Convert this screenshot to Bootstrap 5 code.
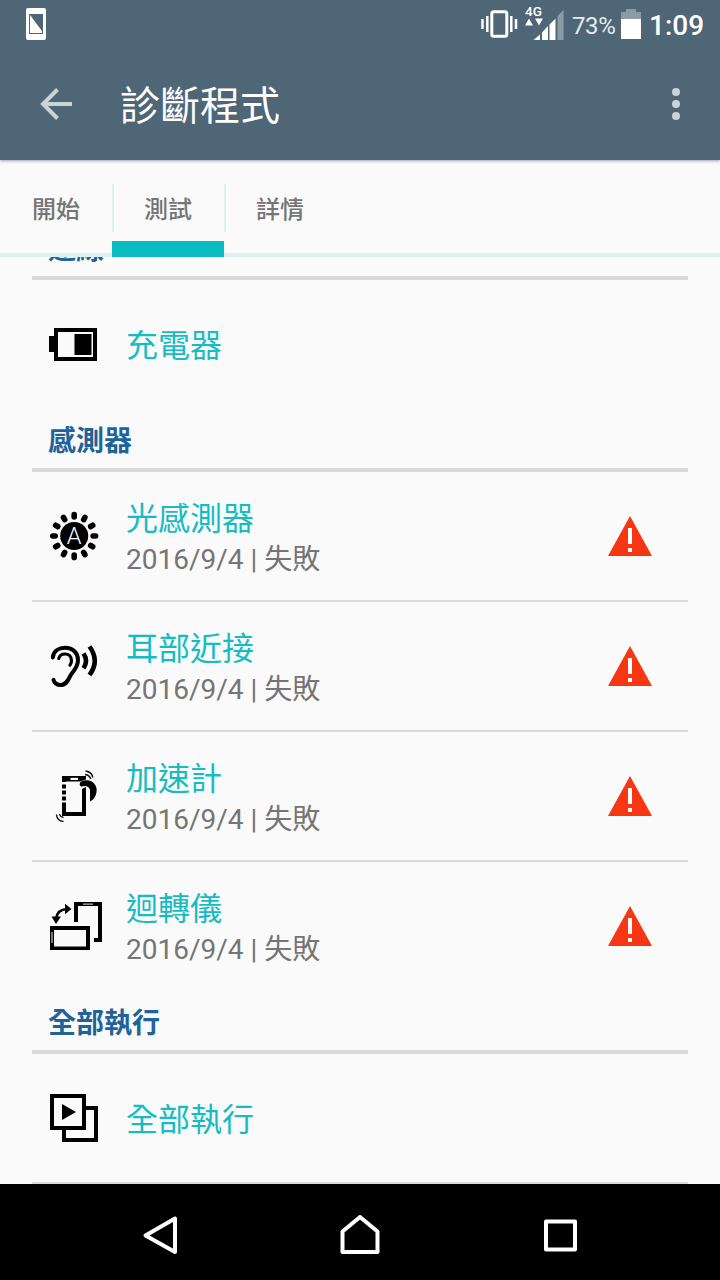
<!DOCTYPE html>
<html lang="zh-Hant">
<head>
<meta charset="utf-8">
<meta name="viewport" content="width=device-width, initial-scale=1">
<title>診斷程式</title>
<link href="https://cdn.jsdelivr.net/npm/bootstrap@5.3.0/dist/css/bootstrap.min.css" rel="stylesheet">
<style>
  body { height: 1280px; background: #fafafa; font-family: Roboto, "Noto Sans CJK TC", sans-serif; line-height: 1; }
  svg { display: block; flex: none; }
  .top-area { background: #4e6675; color: #fff; box-shadow: 0 1px 3px rgba(50,60,90,.45); z-index: 3; }
  .status-bar { height: 48px; padding-left: 26px; padding-right: 16px; }
  .status-pct { font-size: 24px; color: #e6ebee; margin-left: 8px; width: 45px; letter-spacing: -.4px; padding-top: 3px; }
  .status-batt { margin-left: 4px; }
  .status-time { font-size: 28px; font-weight: 500; margin-left: 8px; width: 55px; white-space: nowrap; padding-top: 3px; }
  .app-bar { height: 112px; padding-left: 40px; padding-right: 40px; }
  .app-title { font-size: 40px; font-weight: 400; margin-left: 48px; padding-top: 5px; }
  .tab-strip { height: 97px; z-index: 2; background: #fafafa; border-bottom: 4px solid #daf1f0; }
  .tab-item { width: 112px; height: 97px; color: #757575; font-size: 24px; font-weight: 500; border-bottom: 16px solid transparent; padding-top: 19px; }
  .tab-item.active { border-bottom-color: #0bbdc2; }
  .tab-gap { width: 2px; height: 48px; margin: 24px -2px 0 0; background: #daf1f0; z-index: 1; }
  .scroller { min-height: 0; padding: 0 32px; }
  .section-head { height: 64px; flex: none; border-bottom: 4px solid #dadada; padding: 7px 16px 0; color: #1f6399; font-size: 28px; font-weight: 700; }
  .entry { height: 128px; flex: none; padding-left: 12px; padding-right: 36px; }
  .entry.ruled { height: 130px; border-bottom: 2px solid #dadada; }
  .entry-text { margin-left: 18px; padding-top: 8px; }
  .entry-name { font-size: 32px; color: #16bcc2; line-height: 40px; }
  .entry-text.entry-name { padding-top: 3px; }
  .entry-note { font-size: 28px; color: #757575; line-height: 42px; white-space: nowrap; }
  .nav-keys { height: 96px; background: #000; padding-top: 6px; }
</style>
</head>
<body class="d-flex flex-column overflow-hidden">
<svg width="0" height="0" class="position-absolute" aria-hidden="true">
  <symbol id="warn" viewBox="0 0 44 40"><path d="M22 0 44 40H0Z" fill="#f73614"/><path d="M20 12h4v16h-4zM20 32h4v4h-4z" fill="#fff"/></symbol>
</svg>

<header class="top-area position-relative flex-shrink-0">
  <div class="status-bar d-flex align-items-center">
    <svg width="20" height="32"><path fill="#fff" fill-rule="evenodd" d="M2 0H18Q20 0 20 2V30Q20 32 18 32H2Q0 32 0 30V2Q0 0 2 0ZM3 6V26H17V6Z"/><path fill="#fff" d="M4 7 16 23V25H4Z"/></svg>
    <svg class="ms-auto" width="84" height="40" viewBox="480 4 84 40">
      <rect x="491.800" y="11.800" width="15" height="24.500" rx="2" fill="none" stroke="#fff" stroke-width="3"/>
      <path d="M482.500 19v10M487.300 16v16M511.300 16v16M516 19v10" stroke="#fff" stroke-width="2.500"/>
      <text x="525" y="16" font-size="13.500" font-weight="500" fill="#fff">4G</text>
      <path d="M525 25.500 529 18.500 533 25.500ZM535 18.500H543L539 25.500Z" fill="#fff"/>
      <path d="M533.500 40 540 34.500V40ZM542 32.500 548 26V40H542ZM549.500 24.500 555.500 18.500V40H549.500Z" fill="#fff"/>
      <path d="M557.500 16 563.500 10V40H557.500Z" fill="#8b9ba6"/>
    </svg>
    <span class="status-pct">73%</span>
    <svg class="status-batt" width="20" height="30" viewBox="0 0 20 30"><path fill="#8b9ba6" d="M5 0h10v3h5v7H0V3h5z"/><path fill="#fff" d="M0 10h20v20H0z"/></svg>
    <span class="status-time">1:09</span>
  </div>
  <div class="app-bar d-flex align-items-center">
    <svg width="32" height="32" viewBox="0 0 32 32" fill="none" stroke="#c9d3d8" stroke-width="4"><path d="M32 16H3M17.500 1.500 3 16 17.500 30.500"/></svg>
    <h1 class="app-title mb-0">診斷程式</h1>
    <svg class="ms-auto" width="8" height="32" viewBox="0 0 8 32" fill="#c9d3d8"><circle cx="4" cy="4" r="4"/><circle cx="4" cy="16" r="4"/><circle cx="4" cy="28" r="4"/></svg>
  </div>
</header>

<nav class="tab-strip position-relative d-flex flex-shrink-0">
  <div class="tab-item d-flex align-items-center justify-content-center">開始</div>
  <div class="tab-gap"></div>
  <div class="tab-item active d-flex align-items-center justify-content-center">測試</div>
  <div class="tab-gap"></div>
  <div class="tab-item d-flex align-items-center justify-content-center">詳情</div>
</nav>

<main class="scroller flex-grow-1 d-flex flex-column justify-content-end overflow-hidden">
  <div class="section-head d-flex align-items-center">連線</div>
  <div class="entry d-flex align-items-center">
    <svg width="64" height="56"><path d="M5 20h5v16H5z"/><path fill-rule="evenodd" d="M10 12h43v33H10zM14 16v25h35V16z"/><path d="M30.500 18h17v21h-17z"/></svg>
    <div class="entry-text entry-name">充電器</div>
  </div>

  <div class="section-head d-flex align-items-center">感測器</div>
  <div class="entry ruled d-flex align-items-center">
    <svg width="64" height="56" viewBox="0 0 64 56">
      <circle cx="30.200" cy="28" r="14"/>
      <g stroke="#000" stroke-width="5.600" stroke-linecap="round">
        <path d="M30.200 6.600v2.400M30.200 47v2.400M8.800 28h2.400M49.200 28h2.400"/>
        <path d="M30.200 6.600v2.400M30.200 47v2.400M8.800 28h2.400M49.200 28h2.400" transform="rotate(30 30.200 28)"/>
        <path d="M30.200 6.600v2.400M30.200 47v2.400M8.800 28h2.400M49.200 28h2.400" transform="rotate(60 30.200 28)"/>
      </g>
      <text x="30.200" y="36" font-size="23.500" font-weight="300" text-anchor="middle" fill="#fff">A</text>
    </svg>
    <div class="entry-text"><div class="entry-name">光感測器</div><div class="entry-note">2016/9/4 | 失敗</div></div>
    <svg class="ms-auto" width="44" height="40"><use href="#warn"/></svg>
  </div>
  <div class="entry ruled d-flex align-items-center">
    <svg width="64" height="56" viewBox="0 0 64 56" fill="none" stroke="#000" stroke-width="4">
      <path stroke-linecap="round" d="M8.800 19.500C9.500 13 15 9.800 21 9.800C29 9.800 34 15 34 22C34 30 29 32.500 26.500 37.500C24.500 41.500 22.500 47 16.500 47C12.500 47 10.500 45 9.500 41.800"/>
      <path stroke-width="3.200" stroke-linecap="round" d="M14.800 20.500C15.500 17.500 18 16 21 16C25 16 27.500 19 27.500 22.500Q27.500 25 26 27.200"/>
      <path stroke-width="4.600" d="M39.500 15.500Q44.500 22.800 39.500 30.200M45.500 8.500Q56 22.800 45.500 37"/>
    </svg>
    <div class="entry-text"><div class="entry-name">耳部近接</div><div class="entry-note">2016/9/4 | 失敗</div></div>
    <svg class="ms-auto" width="44" height="40"><use href="#warn"/></svg>
  </div>
  <div class="entry ruled d-flex align-items-center">
    <svg width="64" height="56" viewBox="0 0 64 56">
      <path d="M18 8h24v3.500l-6 2H22v.500h-4zM18 16.500h4v4h-4zM18 22.500h4v4h-4zM18 28.500h4v4h-4zM18 34.500h4v9.500h16V21l4-2v29H18z"/>
      <path d="M26.500 9.800h7.500v2.200h-7.500z" fill="#fafafa"/>
      <path d="M36 14.500Q38 12.300 42 12.200Q48 12 50.500 16Q53.200 19 52.500 24Q51.500 31 46 33.500V21.500Q45 18.500 42 18L37 18.500Q35 16.500 36 14.500Z"/>
      <g fill="none" stroke="#111" stroke-width="1.400"><path d="M41 6.500Q45.500 7 46.800 11M41.500 3Q48 4 48.800 9.500M19.500 49.500Q16 49 15.500 46M19.500 53.500Q13 53 12.500 46.500"/></g>
    </svg>
    <div class="entry-text"><div class="entry-name">加速計</div><div class="entry-note">2016/9/4 | 失敗</div></div>
    <svg class="ms-auto" width="44" height="40"><use href="#warn"/></svg>
  </div>
  <div class="entry d-flex align-items-center">
    <svg width="64" height="56" viewBox="0 0 64 56">
      <path fill-rule="evenodd" d="M6 28h40v24H6zM10 32v16.500h32V32z"/>
      <path d="M30 4h28v40h-8v-4h4V8H34v16h-4z"/>
      <path d="M39 6.200h10M8 34v11" stroke="#bbb" stroke-width="1.300"/>
      <path d="M12 21Q13 11.500 23 11" fill="none" stroke="#000" stroke-width="2.600"/>
      <path d="M27.500 11 21 5.800V16.200ZM12 26 7.500 18.500H17Z"/>
    </svg>
    <div class="entry-text"><div class="entry-name">迴轉儀</div><div class="entry-note">2016/9/4 | 失敗</div></div>
    <svg class="ms-auto" width="44" height="40"><use href="#warn"/></svg>
  </div>

  <div class="section-head d-flex align-items-center">全部執行</div>
  <div class="entry ruled d-flex align-items-center">
    <svg width="64" height="56" viewBox="0 0 64 56" stroke="#000" stroke-width="4" fill="#fafafa"><path d="M20 18h32v32H20z"/><path d="M8 6h32v32H8z"/><path d="M18 14 32 22 18 30Z" fill="#000" stroke="none"/></svg>
    <div class="entry-text entry-name">全部執行</div>
  </div>
</main>

<footer class="nav-keys d-flex flex-shrink-0 align-items-center justify-content-center">
  <svg width="440" height="40" viewBox="140 1215 440 40" fill="none" stroke="#fff" stroke-width="4" stroke-linejoin="round">
    <path d="M145.500 1235.500 175 1218.500V1252Z"/>
    <path d="M342.500 1252V1231.500L360 1217 377.500 1231.500V1252Z"/>
    <path d="M546 1221.500h29v28h-29z"/>
  </svg>
</footer>
<script src="https://cdn.jsdelivr.net/npm/bootstrap@5.3.0/dist/js/bootstrap.bundle.min.js"></script>
</body>
</html>
